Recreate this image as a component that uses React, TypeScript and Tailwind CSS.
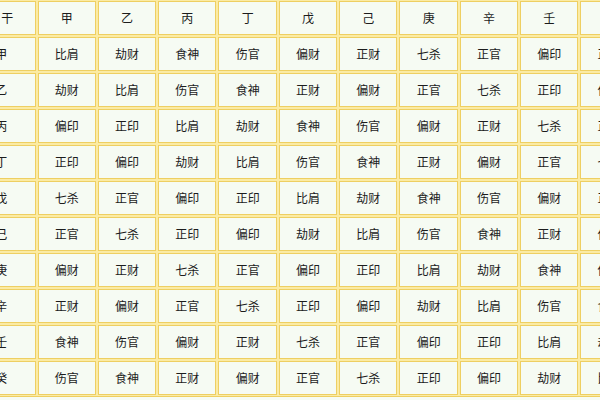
import React from "react";

const header = ["日干", "甲", "乙", "丙", "丁", "戊", "己", "庚", "辛", "壬", "癸"];
const rows: string[][] = [
  ["甲", "比肩", "劫财", "食神", "伤官", "偏财", "正财", "七杀", "正官", "偏印", "正印"],
  ["乙", "劫财", "比肩", "伤官", "食神", "正财", "偏财", "正官", "七杀", "正印", "偏印"],
  ["丙", "偏印", "正印", "比肩", "劫财", "食神", "伤官", "偏财", "正财", "七杀", "正官"],
  ["丁", "正印", "偏印", "劫财", "比肩", "伤官", "食神", "正财", "偏财", "正官", "七杀"],
  ["戊", "七杀", "正官", "偏印", "正印", "比肩", "劫财", "食神", "伤官", "偏财", "正财"],
  ["己", "正官", "七杀", "正印", "偏印", "劫财", "比肩", "伤官", "食神", "正财", "偏财"],
  ["庚", "偏财", "正财", "七杀", "正官", "偏印", "正印", "比肩", "劫财", "食神", "伤官"],
  ["辛", "正财", "偏财", "正官", "七杀", "正印", "偏印", "劫财", "比肩", "伤官", "食神"],
  ["壬", "食神", "伤官", "偏财", "正财", "七杀", "正官", "偏印", "正印", "比肩", "劫财"],
  ["癸", "伤官", "食神", "正财", "偏财", "正官", "七杀", "正印", "偏印", "劫财", "比肩"],
];

export default function App() {
  const all = [header, ...rows];
  return (
    <div className="w-[600px] h-[400px] overflow-hidden bg-[#f6fbf3]">
      <div
        className="ml-[-35px] mt-[-1px] w-max grid grid-cols-[68.5px_repeat(10,58.33px)] auto-rows-[34px] gap-[2px] p-[1px] bg-[#fbeba4] border border-[#eecf62]"
        style={{ fontFamily: '"Noto Sans CJK SC", "Noto Sans", sans-serif' }}
      >
        {all.map((r, i) =>
          r.map((c, j) => (
            <div
              key={`${i}-${j}`}
              className="flex items-center justify-center border border-[#eecf62] bg-[#f6fbf3] text-[12px] text-[#1c1c1c]"
            >
              {c}
            </div>
          ))
        )}
      </div>
    </div>
  );
}
